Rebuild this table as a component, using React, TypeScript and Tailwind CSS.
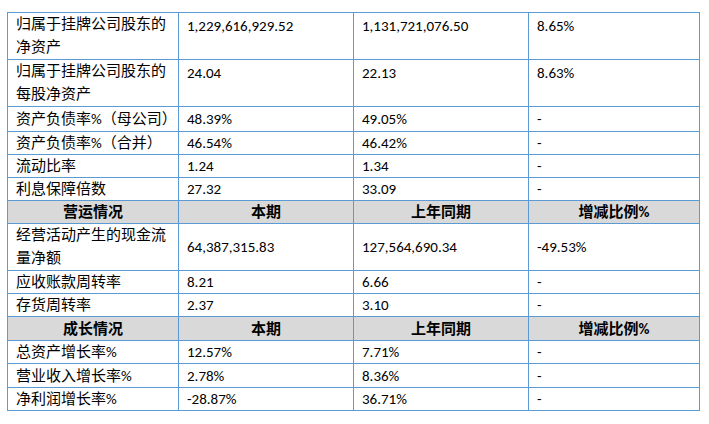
import React from 'react'

type Row =
  | { kind: 'data'; label: React.ReactNode; cur: string; prev: string; diff: string; h: string; tall?: boolean; middle?: boolean }
  | { kind: 'head'; label: string; h: string }

const rows: Row[] = [
  { kind: 'data', label: <>归属于挂牌公司股东的<br />净资产</>, cur: '1,229,616,929.52', prev: '1,131,721,076.50', diff: '8.65%', h: 'h-[47px]', tall: true },
  { kind: 'data', label: <>归属于挂牌公司股东的<br />每股净资产</>, cur: '24.04', prev: '22.13', diff: '8.63%', h: 'h-[46px]', tall: true },
  { kind: 'data', label: '资产负债率%（母公司）', cur: '48.39%', prev: '49.05%', diff: '-', h: 'h-[25px]' },
  { kind: 'data', label: '资产负债率%（合并）', cur: '46.54%', prev: '46.42%', diff: '-', h: 'h-[23px]' },
  { kind: 'data', label: '流动比率', cur: '1.24', prev: '1.34', diff: '-', h: 'h-[23px]' },
  { kind: 'data', label: '利息保障倍数', cur: '27.32', prev: '33.09', diff: '-', h: 'h-[23px]' },
  { kind: 'head', label: '营运情况', h: 'h-[23px]' },
  { kind: 'data', label: <>经营活动产生的现金流<br />量净额</>, cur: '64,387,315.83', prev: '127,564,690.34', diff: '-49.53%', h: 'h-[47px]', tall: true, middle: true },
  { kind: 'data', label: '应收账款周转率', cur: '8.21', prev: '6.66', diff: '-', h: 'h-[23px]' },
  { kind: 'data', label: '存货周转率', cur: '2.37', prev: '3.10', diff: '-', h: 'h-[23px]' },
  { kind: 'head', label: '成长情况', h: 'h-[24px]' },
  { kind: 'data', label: '总资产增长率%', cur: '12.57%', prev: '7.71%', diff: '-', h: 'h-[23px]' },
  { kind: 'data', label: '营业收入增长率%', cur: '2.78%', prev: '8.36%', diff: '-', h: 'h-[24px]' },
  { kind: 'data', label: '净利润增长率%', cur: '-28.87%', prev: '36.71%', diff: '-', h: 'h-[23px]' },
]

const cell = 'border border-[#5b9bd5] px-2 py-0 leading-[20px]'

export default function App() {
  return (
    <div className="w-[709px] h-[424px] bg-white pl-[7px] pt-[12px] text-black font-['Carlito','Liberation_Sans','Noto_Sans_CJK_SC',sans-serif]">
      <table className="w-[692px] table-fixed border-collapse">
        <colgroup>
          <col className="w-[171px]" />
          <col className="w-[175px]" />
          <col className="w-[175px]" />
          <col className="w-[171px]" />
        </colgroup>
        <tbody>
          {rows.map((r, i) => {
            if (r.kind === 'head') {
              return (
                <tr key={i} className={`${r.h} bg-[#d9d9d9] font-bold text-[15px]`}>
                  <td className={`${cell} text-center align-middle`}>{r.label}</td>
                  <td className={`${cell} text-center align-middle`}>本期</td>
                  <td className={`${cell} text-center align-middle`}>上年同期</td>
                  <td className={`${cell} text-center align-middle`}>增减比例%</td>
                </tr>
              )
            }
            const va = r.middle ? 'align-middle' : r.tall ? 'align-top pt-[3px]' : 'align-middle'
            return (
              <tr key={i} className={r.h}>
                <td className={`${cell} text-[15px] ${r.tall ? 'align-middle leading-[23px]' : 'align-middle'}`}>{r.label}</td>
                <td className={`${cell} text-[15px] ${va}`}>{r.cur}</td>
                <td className={`${cell} text-[15px] ${va}`}>{r.prev}</td>
                <td className={`${cell} text-[15px] ${va}`}>{r.diff}</td>
              </tr>
            )
          })}
        </tbody>
      </table>
    </div>
  )
}
